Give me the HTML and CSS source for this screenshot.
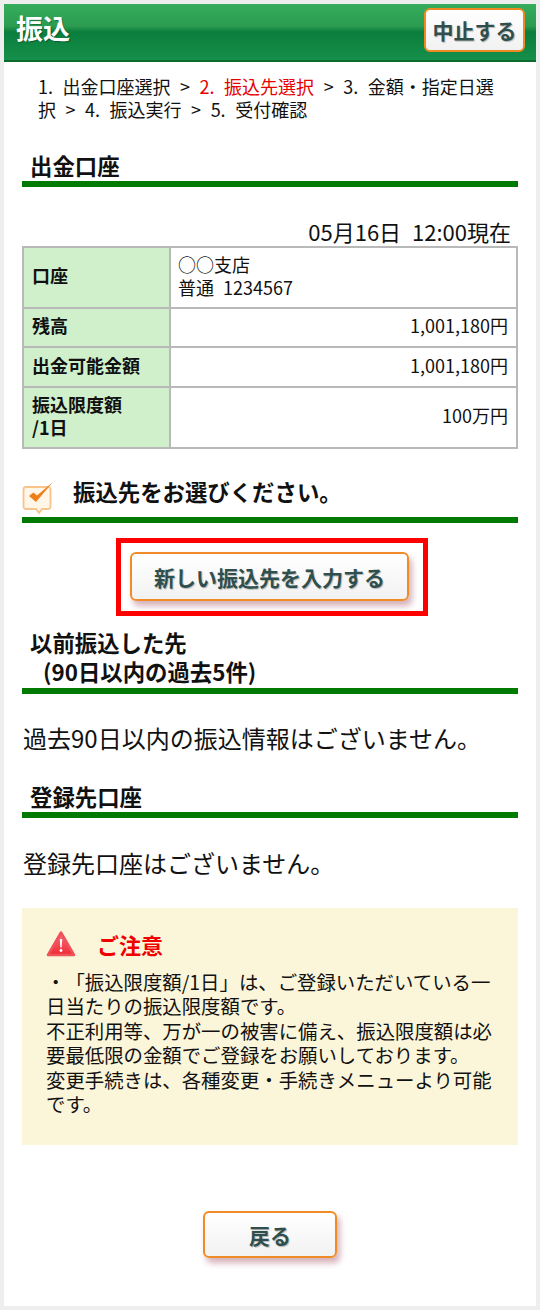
FILE: index.html
```html
<!DOCTYPE html>
<html lang="ja">
<head>
    <meta charset="UTF-8">
    <meta name="viewport" content="width=device-width, initial-scale=1.0">
    <title>振込</title>
    <link rel="stylesheet" href="styles.css">
</head>
<body>
    <div class="page">
        <header class="top-bar">
            <h1>振込</h1>
            <a class="cancel-btn">中止する</a>
        </header>

        <p class="steps">1. 出金口座選択 &gt; <span class="current">2. 振込先選択</span> &gt; 3. 金額・指定日選択 &gt; 4. 振込実行 &gt; 5. 受付確認</p>

        <h2 class="section-title first">出金口座</h2>
        <p class="as-of">05月16日 12:00現在</p>

        <table class="account-table">
            <tr class="row-account">
                <th>口座</th>
                <td>○○支店<br>普通 1234567</td>
            </tr>
            <tr class="row-balance">
                <th>残高</th>
                <td class="amount">1,001,180円</td>
            </tr>
            <tr class="row-available">
                <th>出金可能金額</th>
                <td class="amount">1,001,180円</td>
            </tr>
            <tr class="row-limit">
                <th>振込限度額<br>/1日</th>
                <td class="amount">100万円</td>
            </tr>
        </table>

        <h2 class="section-title choose">
            <svg class="check-icon" width="34" height="36" viewBox="0 0 34 36">
                <path d="M4 8h22a2.500 2.500 0 0 1 2.500 2.500v17a2.500 2.500 0 0 1-2.500 2.500h-6l-3 4-3-4H4a2.500 2.500 0 0 1-2.500-2.500v-17A2.500 2.500 0 0 1 4 8z" fill="#fff6e8" stroke="#f6c48c" stroke-width="1.800"/>
                <path d="M7 17l7 6L31 3l-16 13.500-3.500-3z" fill="#ee7f1b"/>
            </svg>
            振込先をお選びください。
        </h2>

        <div class="highlight">
            <a class="btn btn-new">新しい振込先を入力する</a>
        </div>

        <h2 class="section-title history">以前振込した先<br><span class="indent">(90日以内の過去5件)</span></h2>
        <p class="message">過去90日以内の振込情報はございません。</p>

        <h2 class="section-title registered">登録先口座</h2>
        <p class="message">登録先口座はございません。</p>

        <section class="notice">
            <h3>
                <svg class="warn-icon" width="30" height="28" viewBox="0 0 30 28">
                    <defs>
                        <linearGradient id="warn-fill" x1="0" y1="0" x2="0" y2="1">
                            <stop offset="0" stop-color="#f8707a"/>
                            <stop offset="1" stop-color="#ee2a34"/>
                        </linearGradient>
                    </defs>
                    <path d="M15 2.500L28 25H2z" fill="url(#warn-fill)" stroke="#f0525a" stroke-width="2.500" stroke-linejoin="round"/>
                    <path d="M13.800 9h2.400l-.6 8.500h-1.200z" fill="#fff"/>
                    <circle cx="15" cy="20.500" r="1.400" fill="#fff"/>
                </svg>
                ご注意
            </h3>
            <p>・「振込限度額/1日」は、ご登録いただいている一日当たりの振込限度額です。<br>不正利用等、万が一の被害に備え、振込限度額は必要最低限の金額でご登録をお願いしております。<br>変更手続きは、各種変更・手続きメニューより可能です。</p>
        </section>

        <div class="back-wrap">
            <a class="btn btn-back">戻る</a>
        </div>
    </div>
</body>
</html>
```

FILE: styles.css
```css
html, body {
    margin: 0;
    padding: 0;
}

body {
    background-color: #eeeeee;
    font-family: "Noto Sans CJK JP", "Noto Sans", sans-serif;
    color: #111;
    text-spacing-trim: space-all;
}

.page {
    margin: 4px 4px 0;
    height: 1302px;
    background-color: #fff;
    overflow: hidden;
}

.top-bar {
    height: 56px;
    display: flex;
    justify-content: space-between;
    align-items: flex-start;
    padding: 0 11px 0 12px;
    border-bottom: 2px solid #0a6b2c;
    background: linear-gradient(#35ad5c 0, #2c9c50 22px, #0b7d3c 28px, #15904a 56px);
}

.top-bar h1 {
    margin: 8px 0 0;
    font-size: 27px;
    line-height: 32px;
    font-weight: 700;
    color: #fff;
    text-shadow: 1px 1px 1px rgba(0, 0, 0, 0.3);
}

.cancel-btn {
    margin-top: 4px;
    width: 101px;
    height: 44px;
    box-sizing: border-box;
    display: flex;
    align-items: center;
    justify-content: center;
    background: linear-gradient(#fff, #f1f1f1);
    border: 2px solid #ee8a24;
    border-radius: 6px;
    font-size: 21px;
    font-weight: 700;
    color: #2f4f4f;
    text-shadow: 1px 1px 1px rgba(0, 0, 0, 0.25);
}

.steps {
    margin: 13px 30px 0 34px;
    font-size: 18px;
    line-height: 23px;
    word-spacing: 5.500px;
    word-break: break-all;
}

.current {
    color: #e60000;
}

.section-title {
    margin: 0 18px;
    padding: 0 8px 0;
    border-bottom: 6px solid #007a00;
    font-size: 22.400px;
    font-weight: 700;
    line-height: 26px;
}

.section-title.first {
    margin-top: 31px;
    padding-bottom: 3px;
}

.as-of {
    margin: 30px 25px 0 0;
    text-align: right;
    font-size: 22px;
    line-height: 28px;
    word-spacing: 6px;
}

.account-table {
    width: 496px;
    margin: 1px 18px 0;
    border-collapse: collapse;
    table-layout: fixed;
    font-size: 18px;
    line-height: 23px;
}

.account-table th,
.account-table td {
    border: 2px solid #b9b9b9;
    padding: 0 8px 4px;
}

.account-table th {
    width: 129px;
    background-color: #d0f0cc;
    text-align: left;
    font-weight: 700;
}

.account-table td {
    padding-left: 7px;
    word-spacing: 5px;
}

.row-account,
.row-limit {
    height: 61px;
}

.row-balance {
    height: 39px;
}

.row-available {
    height: 40px;
}

.amount {
    text-align: right;
}

.section-title.choose {
    display: flex;
    align-items: center;
    gap: 17px;
    margin-top: 26px;
    padding: 0 0 10px 0;
    height: 32px;
}

.check-icon {
    flex: none;
    margin-top: 11px;
}

.highlight {
    width: 312px;
    height: 78px;
    margin: 15px auto 0;
    position: relative;
    left: 2px;
    box-sizing: border-box;
    border: 5px solid #ff0000;
    padding: 9px 0 0 9px;
}

.btn {
    display: flex;
    align-items: center;
    justify-content: center;
    box-sizing: border-box;
    background: linear-gradient(#fff, #f2f2f2);
    border: 2px solid #f08c28;
    border-radius: 6px;
    font-weight: 700;
    color: #2f4f4f;
    text-shadow: 1px 1px 1px rgba(0, 0, 0, 0.25);
    box-shadow: 3px 5px 6px rgba(150, 60, 80, 0.4);
}

.btn-new {
    width: 279px;
    height: 49px;
    font-size: 21px;
}

.section-title.history {
    margin-top: 12px;
    padding-bottom: 2px;
    line-height: 29px;
}

.indent {
    padding-left: 13px;
}

.message {
    margin: 0 19px;
    font-size: 24px;
    line-height: 32px;
}

.section-title.history + .message {
    margin-top: 28px;
}

.section-title.registered {
    margin-top: 29px;
    padding-bottom: 3px;
}

.section-title.registered + .message {
    margin-top: 29px;
}

.notice {
    margin: 29px 18px 0;
    height: 237px;
    box-sizing: border-box;
    padding: 20px 22px 0 24px;
    background-color: #fbf5da;
}

.notice h3 {
    display: flex;
    align-items: center;
    gap: 21px;
    margin: 0;
    font-size: 22px;
    line-height: 32px;
    font-weight: 700;
    color: #f00000;
}

.notice p {
    margin: 10px 0 0;
    font-size: 19.400px;
    line-height: 24.400px;
}

.back-wrap {
    display: flex;
    justify-content: center;
    margin-top: 66px;
}

.btn-back {
    width: 134px;
    height: 47px;
    font-size: 21px;
}
```
